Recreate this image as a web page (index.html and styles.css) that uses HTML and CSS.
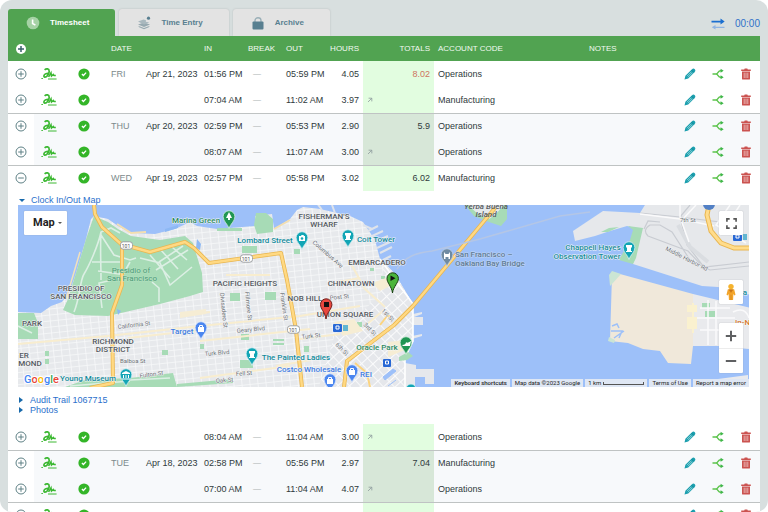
FILE: index.html
```html
<!DOCTYPE html>
<html lang="en">
<head>
<meta charset="utf-8">
<title>Timesheet</title>
<link rel="stylesheet" href="styles.css">
</head>
<body>
<svg class="sprite" aria-hidden="true">
  <symbol id="plus" viewBox="0 0 12 12"><circle cx="6" cy="6" r="5"/><path d="M6 3.2v5.6M3.2 6h5.6"/></symbol>
  <symbol id="plus-solid" viewBox="0 0 12 12"><circle cx="6" cy="6" r="5" fill="#fff"/><path d="M6 3v6M3 6h6" stroke="#39606a" stroke-width="1.500"/></symbol>
  <symbol id="minus" viewBox="0 0 12 12"><circle cx="6" cy="6" r="5"/><path d="M3.2 6h5.6"/></symbol>
  <symbol id="sign" viewBox="0 0 18 14"><path stroke-width="1.700" d="M4.600 2.800C6.200 1.300 9.300 1.300 9.200 4.400c-.1 3.200-2.600 5.900-4.300 5.800C3.200 10 3.800 7.400 5.800 6.800L9 6"/><path stroke-width="1.500" d="M8.600 10l2.400-4.200.5 3.200 1.800-1.600.8 1.200h1.700"/><path stroke-width="1" d="M1.400 11.500h1.500M8 12h8.600"/></symbol>
  <symbol id="check" viewBox="0 0 12 12"><circle cx="6" cy="6" r="5.600" fill="#34b528"/><path d="M3.900 6.100l1.500 1.400 2.700-2.900" fill="none" stroke="#fff" stroke-width="1.300"/></symbol>
  <symbol id="pencil" viewBox="0 0 12 12"><path d="M.5 11.500l.9-3.800L8 1.200c1-1 2-.9 2.800 0s.8 1.900-.1 2.800l-6.500 6.500z" fill="#1b9fae"/><path d="M3 8.200l4.500-4.500M4 9.200l4.500-4.500" stroke="#bfe6ea" stroke-width=".7"/><path d="M7.600 2.200l2.200 2.200" stroke="#0d8292" stroke-width=".8"/></symbol>
  <symbol id="split" viewBox="0 0 12 12"><path d="M.5 6h3.500c2.200 0 2-3.300 4.500-3.300H10M4 6c2.200 0 2 3.300 4.500 3.300H10" fill="none" stroke="#5cc44c" stroke-width="1.400"/><path d="M8.600 .8l3.100 1.900-3.100 2zM8.600 7.300l3.100 2L8.600 11.200z" fill="#3fb64a"/></symbol>
  <symbol id="trash" viewBox="0 0 12 12"><path d="M1.200 1.500h3L4.700.4h2.600l.5 1.100h3V3H1.200zM2 3.500h8v7.200q0 .9-.9.900H2.900q-.9 0-.9-.9z" fill="#cb5350"/><path d="M4.200 4.700v5.300M6 4.700v5.300M7.800 4.700v5.300" stroke="#f7d9d8" stroke-width=".7"/></symbol>
  <symbol id="link" viewBox="0 0 6 6"><path d="M1 5l3.700-3.700M1.600 1.200h3.200v3.200" fill="none" stroke="#8d9a9c" stroke-width=".8"/></symbol>
</svg>

<div class="shell">
  <header class="topbar">
    <nav class="tabs">
      <a class="tab active" href="#timesheet">
        <svg class="tab-icon" viewBox="0 0 14 14"><circle cx="7" cy="7" r="6.300" fill="#a6d2a5"/><path d="M6.600 3.500v4l2.800 1.600" fill="none" stroke="#fff" stroke-width="1.600"/></svg>
        Timesheet</a>
      <a class="tab" href="#entry">
        <svg class="tab-icon" viewBox="0 0 14 14"><path d="M1 8.600l6-2 6 2-6 2.400z" fill="#97a9b0"/><path d="M1 5.400l5.500-2 2.500.8-.2 1.600 3.500.6L7 8.400z" fill="#a9b8be"/><path d="M1 10.800l6 2.400 6-2.400-1.500-.6L7 12l-4.500-1.800z" fill="#97a9b0"/><circle cx="11.500" cy="2.200" r="1.600" fill="#587f90"/></svg>
        Time Entry</a>
      <a class="tab" href="#archive">
        <svg class="tab-icon" viewBox="0 0 14 14"><path d="M4 6V4.500C4 .8 10 .8 10 4.500V6" fill="none" stroke="#9bb0b8" stroke-width="1.400"/><rect x="1.500" y="5.500" width="11" height="8" rx="1" fill="#587f90"/></svg>
        Archive</a>
    </nav>
    <div class="clock">
      <svg class="swap" viewBox="0 0 14 12"><path d="M.5 2.800h9V.6l4.200 3-4.200 3V4.400h-9z" fill="#1b6fd0"/><path d="M13.500 8.800h-9V7L.8 9.300l3.700 2.300V10h9z" fill="#8fb4e3"/></svg>
      <span>00:00</span>
    </div>
  </header>

  <main class="sheet">
    <table>
      <colgroup>
        <col class="w-toggle"><col class="w-sign"><col class="w-check"><col class="w-day"><col class="w-date"><col class="w-in"><col class="w-break"><col class="w-out"><col class="w-hours"><col class="w-totals"><col class="w-account"><col><col class="w-act"><col class="w-act"><col class="w-act">
      </colgroup>
      <thead>
        <tr>
          <th class="ic"><button aria-label="Expand all"><svg class="icon"><use href="#plus-solid"/></svg></button></th>
          <th></th><th></th>
          <th class="day">DATE</th><th></th><th>IN</th><th class="brk-head">BREAK</th><th class="out">OUT</th>
          <th class="num">HOURS</th><th class="num">TOTALS</th><th>ACCOUNT CODE</th><th>NOTES</th><th></th><th></th><th></th>
        </tr>
      </thead>
      <tbody>
        <tr>
          <td class="ic"><button aria-label="Expand"><svg class="icon toggle"><use href="#plus"/></svg></button></td>
          <td class="ic"><svg class="sign"><use href="#sign"/></svg></td>
          <td class="ic"><svg class="icon"><use href="#check"/></svg></td>
          <td class="day">FRI</td><td class="date">Apr 21, 2023</td><td>01:56 PM</td><td class="brk">—</td><td class="out">05:59 PM</td><td class="num">4.05</td>
          <td class="total over">8.02</td><td>Operations</td><td></td>
          <td class="ic"><button aria-label="Edit"><svg class="icon"><use href="#pencil"/></svg></button></td>
          <td class="ic"><button aria-label="Split"><svg class="icon"><use href="#split"/></svg></button></td>
          <td class="ic"><button aria-label="Delete"><svg class="icon"><use href="#trash"/></svg></button></td>
        </tr>
        <tr>
          <td class="ic"><button aria-label="Expand"><svg class="icon toggle"><use href="#plus"/></svg></button></td>
          <td class="ic"><svg class="sign"><use href="#sign"/></svg></td>
          <td class="ic"><svg class="icon"><use href="#check"/></svg></td>
          <td></td><td></td><td>07:04 AM</td><td class="brk">—</td><td class="out">11:02 AM</td><td class="num">3.97</td>
          <td class="total linked"><svg class="link"><use href="#link"/></svg></td><td>Manufacturing</td><td></td>
          <td class="ic"><button aria-label="Edit"><svg class="icon"><use href="#pencil"/></svg></button></td>
          <td class="ic"><button aria-label="Split"><svg class="icon"><use href="#split"/></svg></button></td>
          <td class="ic"><button aria-label="Delete"><svg class="icon"><use href="#trash"/></svg></button></td>
        </tr>
      </tbody>
      <tbody class="shaded">
        <tr>
          <td class="ic"><button aria-label="Expand"><svg class="icon toggle"><use href="#plus"/></svg></button></td>
          <td class="ic"><svg class="sign"><use href="#sign"/></svg></td>
          <td class="ic"><svg class="icon"><use href="#check"/></svg></td>
          <td class="day">THU</td><td class="date">Apr 20, 2023</td><td>02:59 PM</td><td class="brk">—</td><td class="out">05:53 PM</td><td class="num">2.90</td>
          <td class="total">5.9</td><td>Operations</td><td></td>
          <td class="ic"><button aria-label="Edit"><svg class="icon"><use href="#pencil"/></svg></button></td>
          <td class="ic"><button aria-label="Split"><svg class="icon"><use href="#split"/></svg></button></td>
          <td class="ic"><button aria-label="Delete"><svg class="icon"><use href="#trash"/></svg></button></td>
        </tr>
        <tr>
          <td class="ic"><button aria-label="Expand"><svg class="icon toggle"><use href="#plus"/></svg></button></td>
          <td class="ic"><svg class="sign"><use href="#sign"/></svg></td>
          <td class="ic"><svg class="icon"><use href="#check"/></svg></td>
          <td></td><td></td><td>08:07 AM</td><td class="brk">—</td><td class="out">11:07 AM</td><td class="num">3.00</td>
          <td class="total linked"><svg class="link"><use href="#link"/></svg></td><td>Operations</td><td></td>
          <td class="ic"><button aria-label="Edit"><svg class="icon"><use href="#pencil"/></svg></button></td>
          <td class="ic"><button aria-label="Split"><svg class="icon"><use href="#split"/></svg></button></td>
          <td class="ic"><button aria-label="Delete"><svg class="icon"><use href="#trash"/></svg></button></td>
        </tr>
      </tbody>
      <tbody>
        <tr>
          <td class="ic"><button aria-label="Collapse"><svg class="icon toggle"><use href="#minus"/></svg></button></td>
          <td class="ic"><svg class="sign"><use href="#sign"/></svg></td>
          <td class="ic"><svg class="icon"><use href="#check"/></svg></td>
          <td class="day">WED</td><td class="date">Apr 19, 2023</td><td>02:57 PM</td><td class="brk">—</td><td class="out">05:58 PM</td><td class="num">3.02</td>
          <td class="total">6.02</td><td>Manufacturing</td><td></td>
          <td class="ic"><button aria-label="Edit"><svg class="icon"><use href="#pencil"/></svg></button></td>
          <td class="ic"><button aria-label="Split"><svg class="icon"><use href="#split"/></svg></button></td>
          <td class="ic"><button aria-label="Delete"><svg class="icon"><use href="#trash"/></svg></button></td>
        </tr>
        <tr class="expanded">
          <td colspan="15">
            <details open>
              <summary>Clock In/Out Map</summary>
              <div class="map">
                <svg class="map-art" viewBox="18 205 731 182" preserveAspectRatio="xMidYMid slice">
                  <defs>
                    <pattern id="grid" width="8" height="6" patternUnits="userSpaceOnUse" patternTransform="rotate(-6)"><rect width="8" height="6" fill="#e7e9ec"/><path d="M0 0H8M0 0V6" stroke="#f8f9fa" stroke-width="1.600"/></pattern>
                    <pattern id="soma" width="8" height="8" patternUnits="userSpaceOnUse" patternTransform="rotate(-43)"><rect width="8" height="8" fill="#e5e7eb"/><path d="M0 0H8M0 0V8" stroke="#fbfbfc" stroke-width="1.800"/></pattern>
                    <symbol id="pin" viewBox="0 0 14 20" overflow="visible"><path d="M7 19.500C6 15 .8 12 .8 7a6.200 6.200 0 0 1 12.400 0C13.200 12 8 15 7 19.500z"/></symbol>
                    <symbol id="shield" viewBox="0 0 14 9"><rect x=".5" y=".5" width="13" height="8" rx="3" fill="#fff" stroke="#96999d"/></symbol>
                  </defs>
                  <rect x="0" y="190" width="780" height="210" fill="#9dc0f9"/>
                  <!-- city -->
                  <path fill="url(#grid)" d="M18 312L41 313 51 306 62 302 70 291 76 273 86 239 91 219 94 216 108 219 118 226 131 233 155 234 175 229 190 222 197 226 217 229 255 226 255 216 272 214 274 229 290 219 297 210 303 207 320 209 350 216 363 222 375 240 380 259 395 274 413 304 413 340 405 358 405 390H18z"/>
                  <path fill="url(#soma)" d="M395 274L413 304 413 340 405 358 405 390H318L335 334 380 296 384 262z"/>
                  <path d="M413 314l9-2v2l-8 3h9v8h-10zM412 336l10-2v2l-10 3zM405 363l11 2v4h18v15h-9v-7h-10v10h-10z" fill="#e6e8ec"/>
                  <path d="M363 225l9 4M368 231l10-5M370 237l13-6M374 242l14-6M377 248l13-6M380 253l12-6M383 260l8-4M322 210l-5-7M335 213l-3-8" stroke="#dfe3ea" stroke-width="2"/>
                  <path d="M383 377l10-8 3 2-11 9zM388 386l8-6" fill="#9dc0f9" stroke="#9dc0f9"/>
                  <path d="M413 304V341L405 358V387M380 259L413 304" fill="none" stroke="#fff" stroke-width="1.600"/>
                  <!-- parks -->
                  <g fill="#a7dbb6">
                    <path d="M94 216L108 222 118 229 131 236 160 240 185 236 193 243 202 273 203 292 190 296 160 304 108 316 75 315 63 310 68 299 76 273 86 239z"/>
                    <path d="M18 313L34 313 38 323V339L18 339zM65 387L85 380 130 378 173 373 177 387zM177 384L233 379V383L177 387zM254 225l2-12h10l7 6v13l-16 2zM217 228h25v3h-25zM242 246h15v7h-15zM230 293h10v8h-10zM265 292h11v8h-11zM240 360h13v8h-13zM273 339h11v2h-11zM273 343h11v2h-11zM241 334h8v6h-8zM304 346h5v6h-5zM45 351h4v5h-4zM45 359h4v5h-4zM162 350h6v5h-6zM294 249h6v5h-6zM357 322h5v5h-5zM370 268h4v3h-4zM381 276h4v3h-4zM465 205l9 11 15 6 12 4 6-7V205zM399 357l9-5 5 4-6 4-8 1zM200 344h4v5h-4zM112 210l3 3"/>
                  </g>
                  <path d="M117 224l14 9 15-1M274 229l16-9" stroke="#f3deb0" stroke-width="2" fill="none"/>
                  <path d="M66 299l6-20 8-27" stroke="#f3e1bb" stroke-width="1.500" fill="none"/>
                  <path d="M468 205h36l-9 10-6 4-10-4z" fill="#e5e9eb"/>
                  <path d="M165 229l13-4v3l-13 4zM197 239l4 5-1 6-4-2zM117 309l4 2-3 4z" fill="#8db8f4"/>
                  <!-- park paths -->
                  <g fill="none" stroke="#dcefe4" stroke-width="1.600">
                    <path d="M74 312c6-14 6-32 10-38 5-8 14-28 17-42l10-4 9 5M101 232c-1 18 0 30 0 48M101 235l13 20 16 5 6-2M130 262l-9 16-22 5 3 25M140 258l20 5 10 22 22-18M92 262h30M150 255l20 23M160 249l18 20M172 247l15 13M152 282l7 6v14M159 262l24-16M156 270l32-20M122 256l-2 18-22-3"/>
                    <path d="M18 326l14 7M70 386l60-5M130 380l40-2"/>
                  </g>
                  <!-- minor city streets -->
                  <g fill="none" stroke="#f8edcf" stroke-width="2">
                    <path d="M18 344l90-8 92-10 100-10 60-10M180 316l30-4M200 378l90-12M226 275h44M128 338l72-8M300 339l40-5M200 341l110-12M338 282l22-4M350 262l15 27 20 18M276 366l35-6M366 325l18-15"/>
                  </g>
                  <g fill="#f6edd4"><path d="M180 312l26-3v5l-26 4zM334 322l20-3 9 12-20 5zM372 283l14-5 4 8-10 5zM388 342l17-2v10l-17 7z"/></g>
                  <!-- highways -->
                  <g fill="none" stroke="#e9b650" stroke-width="4" stroke-linejoin="round">
                    <path d="M94 205L95 214 102 227 121 244 150 252 185 242 194 248 209 263 281 253 287 280 296 330 302 387M122 245L122 285 112 313 113 383 90 388M495 208L413 306 394 325 347 361 344 387"/>
                  </g>
                  <g fill="none" stroke="#ffd983" stroke-width="2.400" stroke-linejoin="round">
                    <path d="M94 205L95 214 102 227 121 244 150 252 185 242 194 248 209 263 281 253 287 280 296 330 302 387M122 245L122 285 112 313 113 383 90 388M495 208L413 306 394 325 347 361 344 387"/>
                  </g>
                  <path d="M380 325l8-10 5 5M370 387l-3-14-12-10" fill="none" stroke="#fbd481" stroke-width="2"/>
                  <path d="M397 269c8-12 18-16 35-18l48-12 80-23 30-4" fill="none" stroke="#b4c6e6" stroke-width="1.500"/>
                  <!-- east bay -->
                  <path fill="#e6e8eb" d="M573 231L603 211 640 213 648 200H760V297L718 287 702 286 633 264 636 244 640 229 627 226 610 231 595 236 575 241z"/>
                  <path fill="#a7dbb6" d="M601 232l8-4 10-1-11 5zM628 226l15 2-7 30-3 6-14-4 11-20 3-10z"/>
                  <path fill="#f0e8da" d="M612 275L620 274 693 294 693 346 691 364 668 363 660 351 643 349 628 343 610 341z"/>
                  <path fill="#e9eaed" d="M693 294L722 301 760 310V350L718 346H693zM718 379l30-4v12h-30z"/>
                  <path fill="#cbe5d4" d="M609 275l3-4 9 3-9 10-2 2zM609 337l6 3-1 3-6-2z"/>
                  <path d="M612 326l5-2 2 4M611 331h11l-3 7M614 338l10-7" stroke="#9dc0f9" stroke-width="1.500" fill="none"/>
                  <path fill="#a7dbb6" d="M702 303h8v5h-8zM705 311h10v6h-10z"/>
                  <path d="M693 303v30M688 306h8v5h-8zM688 318h8v10h-8z" stroke="#faf1cf" fill="#faf1cf" stroke-width="2"/>
                  <g fill="none" stroke="#c9ccd2" stroke-width="1.200">
                    <path d="M749 266L710 270 690 260 672 232 660 225H650q-8 5-2 11l40 15 17 18M640 213l40 4 40 5M660 222l-12-1-4 8M680 217l7 28 17 22 45-5M690 205l-10 12"/>
                    <path d="M678 225l12 22 18 15" stroke-width="4" stroke="#dadde1"/>
                  </g>
                  <g fill="none" stroke="#fafafb" stroke-width="1.500"><path d="M640 214l40 5 34 7M680 205v12l9 25M696 205l-14 15M700 308h30M697 318h38M700 330h30M708 300v45M716 301v44M733 312q12-6 16 6M730 205l-14 20 30 18M740 205l-20 30"/></g>
                  <path d="M710 200L707 215 711 231 721 243 734 248 752 248" fill="none" stroke="#e9b650" stroke-width="5"/>
                  <path d="M710 200L707 215 711 231 721 243 734 248 752 248" fill="none" stroke="#ffdc8b" stroke-width="3"/>
                  <circle cx="709" cy="204" r="6" fill="#5280c5"/>
                  <!-- road shields -->
                  <use href="#shield" x="120" y="241" width="13" height="9"/><use href="#shield" x="240" y="254" width="13" height="9"/><use href="#shield" x="287" y="325" width="13" height="9"/>
                  <g class="t-shield"><text x="126" y="248">101</text><text x="246" y="261">101</text><text x="293" y="332">101</text></g>
                  <!-- street names -->
                  <g class="t-street">
                    <text transform="translate(118 329) rotate(-7)">California St</text><text transform="translate(120 363)">Balboa St</text><text transform="translate(140 378) rotate(-8)">Fulton St</text>
                    <text transform="translate(205 356) rotate(-5)">Turk Blvd</text><text transform="translate(237 333) rotate(-6)">Geary Blvd</text><text transform="translate(302 339) rotate(-6)">Turk St</text><text transform="translate(236 376) rotate(-4)">Fell St</text><text transform="translate(216 383) rotate(-5)">Oak St</text>
                    <text transform="translate(220 293) rotate(84)">Divisadero St</text><text transform="translate(245 292) rotate(84)">Fillmore St</text><text transform="translate(280 293) rotate(82)">Franklin St</text>
                    <text transform="translate(312 243) rotate(41)">Columbus Ave</text><text transform="translate(330 300) rotate(-6)">Post St</text><text transform="translate(335 345) rotate(45)">6th St</text><text transform="translate(363 325) rotate(45)">3rd St</text><text transform="translate(381 311) rotate(45)">1st St</text>
                    <text x="680" y="222">7th St</text><text transform="translate(665 250) rotate(27)">Middle Harbor Rd</text>
                  </g>
                  <!-- districts -->
                  <g class="t-area">
                    <text x="81" y="291">PRESIDIO OF</text><text x="81" y="299">SAN FRANCISCO</text><text x="32" y="326">PARK</text><text x="24" y="358">ER</text><text x="30" y="366">MOND</text>
                    <text x="113" y="344">RICHMOND</text><text x="113" y="352">DISTRICT</text><text x="245" y="286">PACIFIC HEIGHTS</text><text x="324" y="219">FISHERMAN'S</text><text x="324" y="227">WHARF</text>
                    <text x="377" y="265">EMBARCADERO</text><text x="351" y="286">CHINATOWN</text><text x="305" y="301">NOB HILL</text><text x="345" y="317">UNION SQUARE</text>
                  </g>
                  <g class="t-island"><text x="486" y="209">Yerba Buena</text><text x="486" y="217">Island</text></g>
                  <!-- places -->
                  <g class="t-place park"><text x="131" y="273">Presidio of</text><text x="132" y="281">San Francisco</text></g>
                  <g class="t-place green"><text x="196" y="223">Marina Green</text><text x="377" y="350">Oracle Park</text></g>
                  <g class="t-place teal"><text x="265" y="243">Lombard Street</text><text x="376" y="242">Coit Tower</text><text x="296" y="360">The Painted Ladies</text><text x="88" y="381">Young Museum</text><text x="593" y="250">Chappell Hayes</text><text x="587" y="259">Observation Tower</text><text x="744" y="295">la</text></g>
                  <g class="t-place blue"><text x="182" y="334">Target</text><text x="309" y="372">Costco Wholesale</text><text x="366" y="377">REI</text></g>
                  <g class="t-place bridge"><text x="455" y="257">San Francisco –</text><text x="455" y="266">Oakland Bay Bridge</text></g>
                  <g class="t-place food"><text x="735" y="325">In-N</text></g>
                  <!-- place pins -->
                  <g fill="#12a5b5" stroke="#d8f1f4" stroke-width=".8"><use href="#pin" x="295" y="231" width="14" height="19"/><use href="#pin" x="341" y="229" width="14" height="19"/><use href="#pin" x="245" y="347" width="14" height="19"/><use href="#pin" x="119" y="368" width="14" height="19"/><use href="#pin" x="622" y="241" width="14" height="19"/><circle cx="411" cy="389" r="5"/></g>
                  <g fill="#219653" stroke="#d5efdf" stroke-width=".8"><use href="#pin" x="222" y="210" width="14" height="19"/><use href="#pin" x="399" y="336" width="14" height="19"/></g>
                  <g fill="#4b86ef" stroke="#dce8fd" stroke-width=".8"><use href="#pin" x="194" y="321" width="14" height="19"/><use href="#pin" x="345" y="364" width="14" height="19"/><use href="#pin" x="323" y="373" width="14" height="19"/></g>
                  <use href="#pin" x="440" y="248" width="14" height="19" fill="#6f8ba3" stroke="#c4d4e8" stroke-width=".8"/>
                  <g fill="#fff">
                    <path d="M299 236h2l.5-1h2l.5 1h1v5h-6zM345 233h6v2l-1 1v3h1v1h-6v-1h1v-3l-1-1zM249 351h6v2l-1 1v3h1v1h-6v-1h1v-3l-1-1zM626 245h6v2l-1 1v3h1v1h-6v-1h1v-3l-1-1zM122 373l4-2 4 2v1h-8zM123 375h1v3h-1zM125.500 375h1v3h-1zM128 375h1v3h-1zM122 378.500h8v1h-8z"/>
                    <path d="M229 212l3 6h-2v2h-2v-2h-2zM402 345q4 0 4-3 1 2 5-1l-1 5h-7z"/>
                    <path d="M198 327h6v5h-6zM349 370h6v5h-6zM327 379h6v5h-6zM444 252v7h1.500v-2h3v2h1.500v-7l-1.500 2h-3z"/>
                  </g>
                  <circle cx="302" cy="238.500" r="1.300" fill="#12a5b5"/>
                  <path d="M199.500 327v-1.500h3v1.500M350.500 370v-1.500h3v1.500M328.500 379v-1.500h3v1.500" fill="none" stroke="#fff"/>
                  <g fill="#2767d5"><rect x="333" y="324" width="9" height="8" rx="1"/><rect x="383" y="359" width="8" height="8" rx="1"/><rect x="733" y="233" width="9" height="8" rx="1"/></g>
                  <path d="M336 326h3v3h-3zM385.500 361h3v3h-3zM736 235h3v3h-3z" fill="none" stroke="#fff" stroke-width="1"/>
                  <rect x="343" y="325" width="5" height="6" fill="#62b6d1"/><rect x="743" y="234" width="4" height="6" fill="#62b6d1"/>
                  <!-- clock in and clock out -->
                  <path d="M326 319C325 312 320.500 309 320.500 304.500a5.700 5.700 0 0 1 11.400 0C331.900 309 327 312 326 319z" fill="#e8473f" stroke="#6d1c18" stroke-width="1"/><rect x="324" y="302" width="5" height="5" fill="#111"/>
                  <path d="M392.500 293C391.500 286 387 283 387 278.500a5.700 5.700 0 0 1 11.400 0C398.400 283 393.500 286 392.500 293z" fill="#4bb53c" stroke="#173f12" stroke-width="1"/><path d="M390.500 275.500v5.500l5-2.700z" fill="#111"/>
                  <text class="t-google" x="24" y="383"><tspan fill="#4285f4">G</tspan><tspan fill="#ea4335">o</tspan><tspan fill="#fbbc04">o</tspan><tspan fill="#4285f4">g</tspan><tspan fill="#34a853">l</tspan><tspan fill="#ea4335">e</tspan></text>
                </svg>
                <button class="map-type">Map <span class="caret"></span></button>
                <button class="map-btn full" aria-label="Full screen"><svg viewBox="0 0 12 12"><path d="M1 4V1h3M8 1h3v3M11 8v3H8M4 11H1V8" fill="none" stroke="#555" stroke-width="1.800"/></svg></button>
                <button class="map-btn person" aria-label="Street view"><svg viewBox="0 0 12 20"><circle cx="6" cy="4" r="3" fill="#f5b32e"/><path d="M2.500 7h7l1.500 6-1.500 1-.8-2-.4 7H3.700l-.4-7-.8 2L1 13z" fill="#f2a42a"/><path d="M4 7.500l2 3 2-3zM6 13v6" fill="#c8751a" stroke="#c8751a" stroke-width=".6"/></svg></button>
                <div class="zoom">
                  <button aria-label="Zoom in"><svg viewBox="0 0 12 12"><path d="M6 .8v10.400M.8 6h10.400" stroke="#5f6062" stroke-width="2"/></svg></button>
                  <button aria-label="Zoom out"><svg viewBox="0 0 12 12"><path d="M.8 6h10.400" stroke="#5f6062" stroke-width="2"/></svg></button>
                </div>
                <div class="map-foot">
                  <button>Keyboard shortcuts</button><span>Map data ©2023 Google</span><span class="scale">1 km <i></i></span><a href="#terms">Terms of Use</a><a href="#report">Report a map error</a>
                </div>
              </div>
            </details>
            <details class="after-map"><summary>Audit Trail 1067715</summary></details>
            <details><summary>Photos</summary></details>
          </td>
        </tr>
        <tr>
          <td class="ic"><button aria-label="Expand"><svg class="icon toggle"><use href="#plus"/></svg></button></td>
          <td class="ic"><svg class="sign"><use href="#sign"/></svg></td>
          <td class="ic"><svg class="icon"><use href="#check"/></svg></td>
          <td></td><td></td><td>08:04 AM</td><td class="brk">—</td><td class="out">11:04 AM</td><td class="num">3.00</td>
          <td class="total linked"><svg class="link"><use href="#link"/></svg></td><td>Operations</td><td></td>
          <td class="ic"><button aria-label="Edit"><svg class="icon"><use href="#pencil"/></svg></button></td>
          <td class="ic"><button aria-label="Split"><svg class="icon"><use href="#split"/></svg></button></td>
          <td class="ic"><button aria-label="Delete"><svg class="icon"><use href="#trash"/></svg></button></td>
        </tr>
      </tbody>
      <tbody class="shaded">
        <tr>
          <td class="ic"><button aria-label="Expand"><svg class="icon toggle"><use href="#plus"/></svg></button></td>
          <td class="ic"><svg class="sign"><use href="#sign"/></svg></td>
          <td class="ic"><svg class="icon"><use href="#check"/></svg></td>
          <td class="day">TUE</td><td class="date">Apr 18, 2023</td><td>02:58 PM</td><td class="brk">—</td><td class="out">05:56 PM</td><td class="num">2.97</td>
          <td class="total">7.04</td><td>Manufacturing</td><td></td>
          <td class="ic"><button aria-label="Edit"><svg class="icon"><use href="#pencil"/></svg></button></td>
          <td class="ic"><button aria-label="Split"><svg class="icon"><use href="#split"/></svg></button></td>
          <td class="ic"><button aria-label="Delete"><svg class="icon"><use href="#trash"/></svg></button></td>
        </tr>
        <tr>
          <td class="ic"><button aria-label="Expand"><svg class="icon toggle"><use href="#plus"/></svg></button></td>
          <td class="ic"><svg class="sign"><use href="#sign"/></svg></td>
          <td class="ic"><svg class="icon"><use href="#check"/></svg></td>
          <td></td><td></td><td>07:00 AM</td><td class="brk">—</td><td class="out">11:04 AM</td><td class="num">4.07</td>
          <td class="total linked"><svg class="link"><use href="#link"/></svg></td><td>Operations</td><td></td>
          <td class="ic"><button aria-label="Edit"><svg class="icon"><use href="#pencil"/></svg></button></td>
          <td class="ic"><button aria-label="Split"><svg class="icon"><use href="#split"/></svg></button></td>
          <td class="ic"><button aria-label="Delete"><svg class="icon"><use href="#trash"/></svg></button></td>
        </tr>
      </tbody>
      <tbody>
        <tr>
          <td class="ic"><button aria-label="Expand"><svg class="icon toggle"><use href="#plus"/></svg></button></td>
          <td class="ic"><svg class="sign"><use href="#sign"/></svg></td>
          <td class="ic"><svg class="icon"><use href="#check"/></svg></td>
          <td></td><td></td><td></td><td></td><td></td><td></td><td class="total"></td><td></td><td></td>
          <td class="ic"><button aria-label="Edit"><svg class="icon"><use href="#pencil"/></svg></button></td>
          <td class="ic"><button aria-label="Split"><svg class="icon"><use href="#split"/></svg></button></td>
          <td class="ic"><button aria-label="Delete"><svg class="icon"><use href="#trash"/></svg></button></td>
        </tr>
      </tbody>
    </table>
  </main>
</div>
</body>
</html>
```

FILE: styles.css
```css
* { box-sizing: border-box; }

body {
  margin: 0;
  background: #fff;
  color: #2f3a3c;
  font: 9px/12px "Liberation Sans", Arial, sans-serif;
}

.sprite { position: absolute; width: 0; height: 0; }

button {
  margin: 0;
  padding: 0;
  border: 0;
  background: none;
  color: inherit;
  font: inherit;
  cursor: pointer;
}

a { color: inherit; text-decoration: none; }

.shell {
  display: flex;
  flex-direction: column;
  height: 100vh;
  padding: 9px 8px 0;
  background: #d8dfdf;
  border-radius: 12px;
  overflow: hidden;
}

/* Tabs */
.topbar {
  display: flex;
  justify-content: space-between;
  align-items: flex-end;
}

.tabs { display: flex; gap: 4px; }

.tab {
  display: flex;
  align-items: center;
  gap: 10px;
  height: 27px;
  padding: 0 26px 0 18px;
  background: #e3e3e3;
  border-radius: 3px 3px 0 0;
  box-shadow: 0 0 2px #b4baba;
  color: #587f90;
  font-size: 8px;
  font-weight: bold;
}

.tab.active {
  background: #51a351;
  box-shadow: none;
  color: #fff;
}

.tab-icon { width: 14px; height: 14px; }

.clock {
  display: flex;
  align-items: center;
  gap: 10px;
  padding-bottom: 6px;
  color: #2f72c9;
  font-size: 10px;
}

.swap { width: 14px; height: 12px; }

/* Table */
.sheet {
  flex: 1;
  min-height: 0;
  overflow: hidden;
  background: #fff;
}

table {
  width: 100%;
  table-layout: fixed;
  border-collapse: separate;
  border-spacing: 0;
}

.w-toggle { width: 26px; }
.w-sign { width: 29px; }
.w-check { width: 42px; }
.w-day { width: 35px; }
.w-date { width: 60px; }
.w-in { width: 46px; }
.w-break { width: 34px; }
.w-out { width: 45px; }
.w-hours { width: 38px; }
.w-totals { width: 71px; }
.w-account { width: 151px; }
.w-act { width: 28px; }

th, td {
  height: 26px;
  padding: 0 4px;
  text-align: left;
  white-space: nowrap;
}

th {
  height: 25px;
  background: #51a351;
  color: #f2faf2;
  font-size: 8px;
  font-weight: normal;
}

tbody + tbody > tr:first-child > td { box-shadow: inset 0 1px #bfc3c3; }

.ic { padding: 0; text-align: center; }
.ic button, .ic svg { display: block; margin: 0 auto; }
.day { padding-left: 6px; }
td.day { color: #7c8a8c; }
.date { padding: 0 4px 0 6px; }
.brk-head { padding-left: 2px; }
.brk { padding-left: 7px; color: #a9b0b0; font-size: 8px; }
.out { padding-left: 6px; }
.num, .total { text-align: right; }

.total { background: #e2fde0; }
.total.over { color: #cf7461; }
.total.linked { text-align: left; }
.link { display: block; width: 6px; height: 6px; }

.shaded td { background: #f7f9fb; }
.shaded td:first-child { background: #fff; }
.shaded .total { background: #d7e7d8; }

.icon { width: 12px; height: 12px; }
.toggle { fill: none; stroke: #5e8085; stroke-width: 1; }
.sign { width: 18px; height: 14px; fill: none; stroke: #3cb832; }

/* Expanded entry */
.expanded td { padding: 4px 11px 9px 10px; }

summary {
  display: flex;
  align-items: center;
  gap: 6px;
  padding-left: 1px;
  color: #2a70cc;
  line-height: 10px;
  cursor: pointer;
}

summary::before {
  content: "";
  border: 3px solid transparent;
  border-left: 4px solid #1769ab;
  border-right: 0;
  margin-right: 1px;
}

details[open] > summary::before {
  border: 3px solid transparent;
  border-top: 3px solid #1769ab;
  border-bottom: 0;
  margin-right: 0;
}

.after-map { margin-top: 8px; }

.map {
  position: relative;
  overflow: hidden;
  font-family: Roboto, sans-serif;
}

.map-art {
  display: block;
  width: 100%;
  height: 182px;
}

.map-art text { paint-order: stroke; stroke-linejoin: round; }
.t-shield { font-size: 5px; fill: #555; text-anchor: middle; }
.t-street { font-size: 6px; fill: #6b7075; stroke: #f3f4f6; stroke-width: 1px; }
.t-area { font-size: 8px; font-weight: 500; fill: #54595f; stroke: #f3f4f6; stroke-width: 1px; text-anchor: middle; }
.t-island { font-size: 8px; font-style: italic; font-weight: 500; fill: #54595f; text-anchor: middle; }
.t-place { font-size: 8px; font-weight: 500; stroke: #f3f6f8; stroke-width: 1px; }
.park, .green { fill: #2e8a5f; text-anchor: middle; }
.park { fill: #4b9a76; stroke: #b5e2c2; font-weight: 400; }
.teal { fill: #12899a; text-anchor: middle; }
.blue { fill: #3f7be0; text-anchor: middle; }
.bridge { fill: #5d7b96; stroke: #c3d6f4; }
.food { fill: #d9772b; }
.t-google { font-size: 11px; font-weight: 500; stroke: #fff; stroke-width: 2px; }

.map-type, .map-btn, .zoom {
  position: absolute;
  background: #fff;
  border-radius: 1px;
  box-shadow: 0 0 1px #8b9096;
}

.map-type {
  top: 6px;
  left: 6px;
  display: flex;
  align-items: center;
  gap: 3px;
  padding: 6px 5px 6px 9px;
  color: #222;
  font-size: 11px;
  font-weight: 700;
}

.caret {
  border: 2px solid transparent;
  border-top-color: #555;
  border-bottom: 0;
}

.map-btn {
  right: 6px;
  display: flex;
  align-items: center;
  justify-content: center;
  width: 24px;
  height: 24px;
}

.full { top: 6px; }
.full svg { width: 11px; height: 11px; }
.person { top: 75px; }
.person svg { width: 12px; height: 18px; }

.zoom {
  top: 118px;
  right: 6px;
  display: flex;
  flex-direction: column;
  width: 24px;
}

.zoom button {
  display: flex;
  align-items: center;
  justify-content: center;
  height: 25px;
}

.zoom button + button { border-top: 1px solid #ececec; }
.zoom svg { width: 12px; height: 12px; }

.map-foot {
  position: absolute;
  right: 0;
  bottom: 0;
  display: flex;
  gap: 2px;
  color: #222;
  font-size: 6px;
  line-height: 8px;
}

.map-foot > * {
  padding: 0 3px;
  background: #dfe7f4;
}

.map-foot button { font-weight: 500; }

.scale { display: flex; align-items: center; gap: 2px; }

.scale i {
  width: 41px;
  height: 3px;
  border: 1px solid #555;
  border-top: 0;
}
```
